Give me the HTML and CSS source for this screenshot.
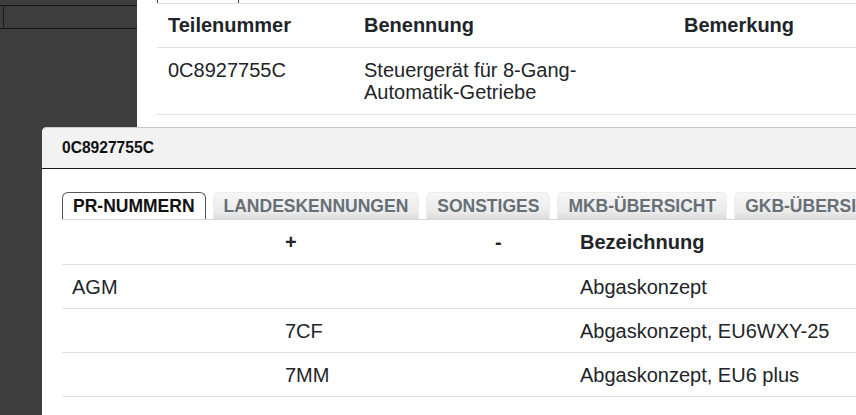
FILE: index.html
```html
<!DOCTYPE html>
<html lang="de">
<head>
<meta charset="utf-8">
<title>Teile</title>
<link rel="stylesheet" href="styles.css">
</head>
<body>
<div class="page">
  <aside class="sidebar">
    <div class="toolbar"><span class="tool-edge"></span></div>
  </aside>
  <main class="main">
    <div class="topbox"><span class="topbox-cell"></span></div>
    <table class="parts">
      <colgroup><col class="pc1"><col class="pc2"><col></colgroup>
      <thead>
        <tr><th>Teilenummer</th><th>Benennung</th><th>Bemerkung</th></tr>
      </thead>
      <tbody>
        <tr><td>0C8927755C</td><td>Steuergerät für 8-Gang-Automatik-Getriebe</td><td></td></tr>
      </tbody>
    </table>
  </main>
</div>

<section class="dialog">
  <header class="dialog-head">0C8927755C</header>
  <div class="dialog-body">
    <nav class="tabs">
      <span class="tab active">PR-NUMMERN</span>
      <span class="tab">LANDESKENNUNGEN</span>
      <span class="tab">SONSTIGES</span>
      <span class="tab">MKB-ÜBERSICHT</span>
      <span class="tab">GKB-ÜBERSICHT</span>
    </nav>
    <table class="pr">
      <colgroup><col class="c1"><col class="c2"><col class="c3"><col></colgroup>
      <thead>
        <tr><th></th><th>+</th><th>-</th><th>Bezeichnung</th></tr>
      </thead>
      <tbody>
        <tr><td>AGM</td><td></td><td></td><td>Abgaskonzept</td></tr>
        <tr><td></td><td>7CF</td><td></td><td>Abgaskonzept, EU6WXY-25</td></tr>
        <tr><td></td><td>7MM</td><td></td><td>Abgaskonzept, EU6 plus</td></tr>
      </tbody>
    </table>
  </div>
</section>
</body>
</html>
```

FILE: styles.css
```css
html, body {
  margin: 0;
  padding: 0;
  height: 100%;
  overflow: hidden;
}
body {
  background: #3d3d3d;
  font-family: "Liberation Sans", Arial, sans-serif;
  color: #212529;
}
.page {
  display: flex;
  height: 100%;
}
.sidebar {
  width: 137px;
  flex: none;
  background: #3d3d3d;
}
.toolbar {
  margin-top: 5px;
  height: 22px;
  border-top: 1px solid #161616;
  border-bottom: 1px solid #161616;
  display: flex;
}
.tool-edge {
  width: 3px;
  border-right: 1px solid #1e1e1e;
}
.main {
  flex: 1;
  background: #fff;
  padding-left: 20px;
  min-width: 0;
}
.topbox {
  height: 3px;
  border-bottom: 1px solid #dee2e6;
}
.topbox-cell {
  display: block;
  width: 80px;
  height: 3px;
  border-left: 1px solid #444;
  border-right: 1px solid #444;
}
table {
  border-collapse: collapse;
  font-size: 20px;
  line-height: 22px;
}
.parts {
  width: 720px;
  table-layout: fixed;
}
.parts .pc1 { width: 196px; }
.parts .pc2 { width: 320px; }
.parts th, .parts td {
  text-align: left;
  vertical-align: top;
  padding: 11px 11px;
  border-bottom: 1px solid #dee2e6;
}
.parts th {
  padding: 10px 11px 11px;
  font-weight: bold;
}
.dialog {
  position: absolute;
  left: 42px;
  top: 127px;
  width: 860px;
  height: 320px;
  background: #fff;
  border-radius: 5px 0 0 0;
}
.dialog-head {
  height: 40px;
  background: #f2f2f2;
  border-top: 1px solid #c8c8c8;
  border-bottom: 1px solid #1a1a1a;
  border-radius: 5px 0 0 0;
  padding-left: 20px;
  font-size: 15.6px;
  font-weight: bold;
  line-height: 40px;
  color: #111;
}
.dialog-body {
  padding: 23px 0 0 20px;
}
.tabs {
  display: flex;
  gap: 7px;
  border-bottom: 1px solid #d8d8d8;
  white-space: nowrap;
  overflow: hidden;
}
.tab {
  flex: none;
  height: 26px;
  padding: 0 10px;
  font-size: 17.5px;
  font-weight: bold;
  line-height: 27px;
  color: #676f76;
  background: linear-gradient(#f6f6f6, #eaeaea 75%, #d9d9d9);
  border: 1px solid #ececec;
  border-bottom: none;
  border-radius: 6px 6px 0 0;
}
.tab.active {
  color: #111;
  background: #fff;
  border-color: #555;
}
.pr {
  width: 820px;
  table-layout: fixed;
}
.pr .c1 { width: 213px; }
.pr .c2 { width: 210px; }
.pr .c3 { width: 85px; }
.pr th, .pr td {
  text-align: left;
  padding: 11px 10px 10px;
  border-bottom: 1px solid #dee2e6;
}
.pr th {
  padding: 11px 10px 11px;
  font-weight: bold;
}
```
